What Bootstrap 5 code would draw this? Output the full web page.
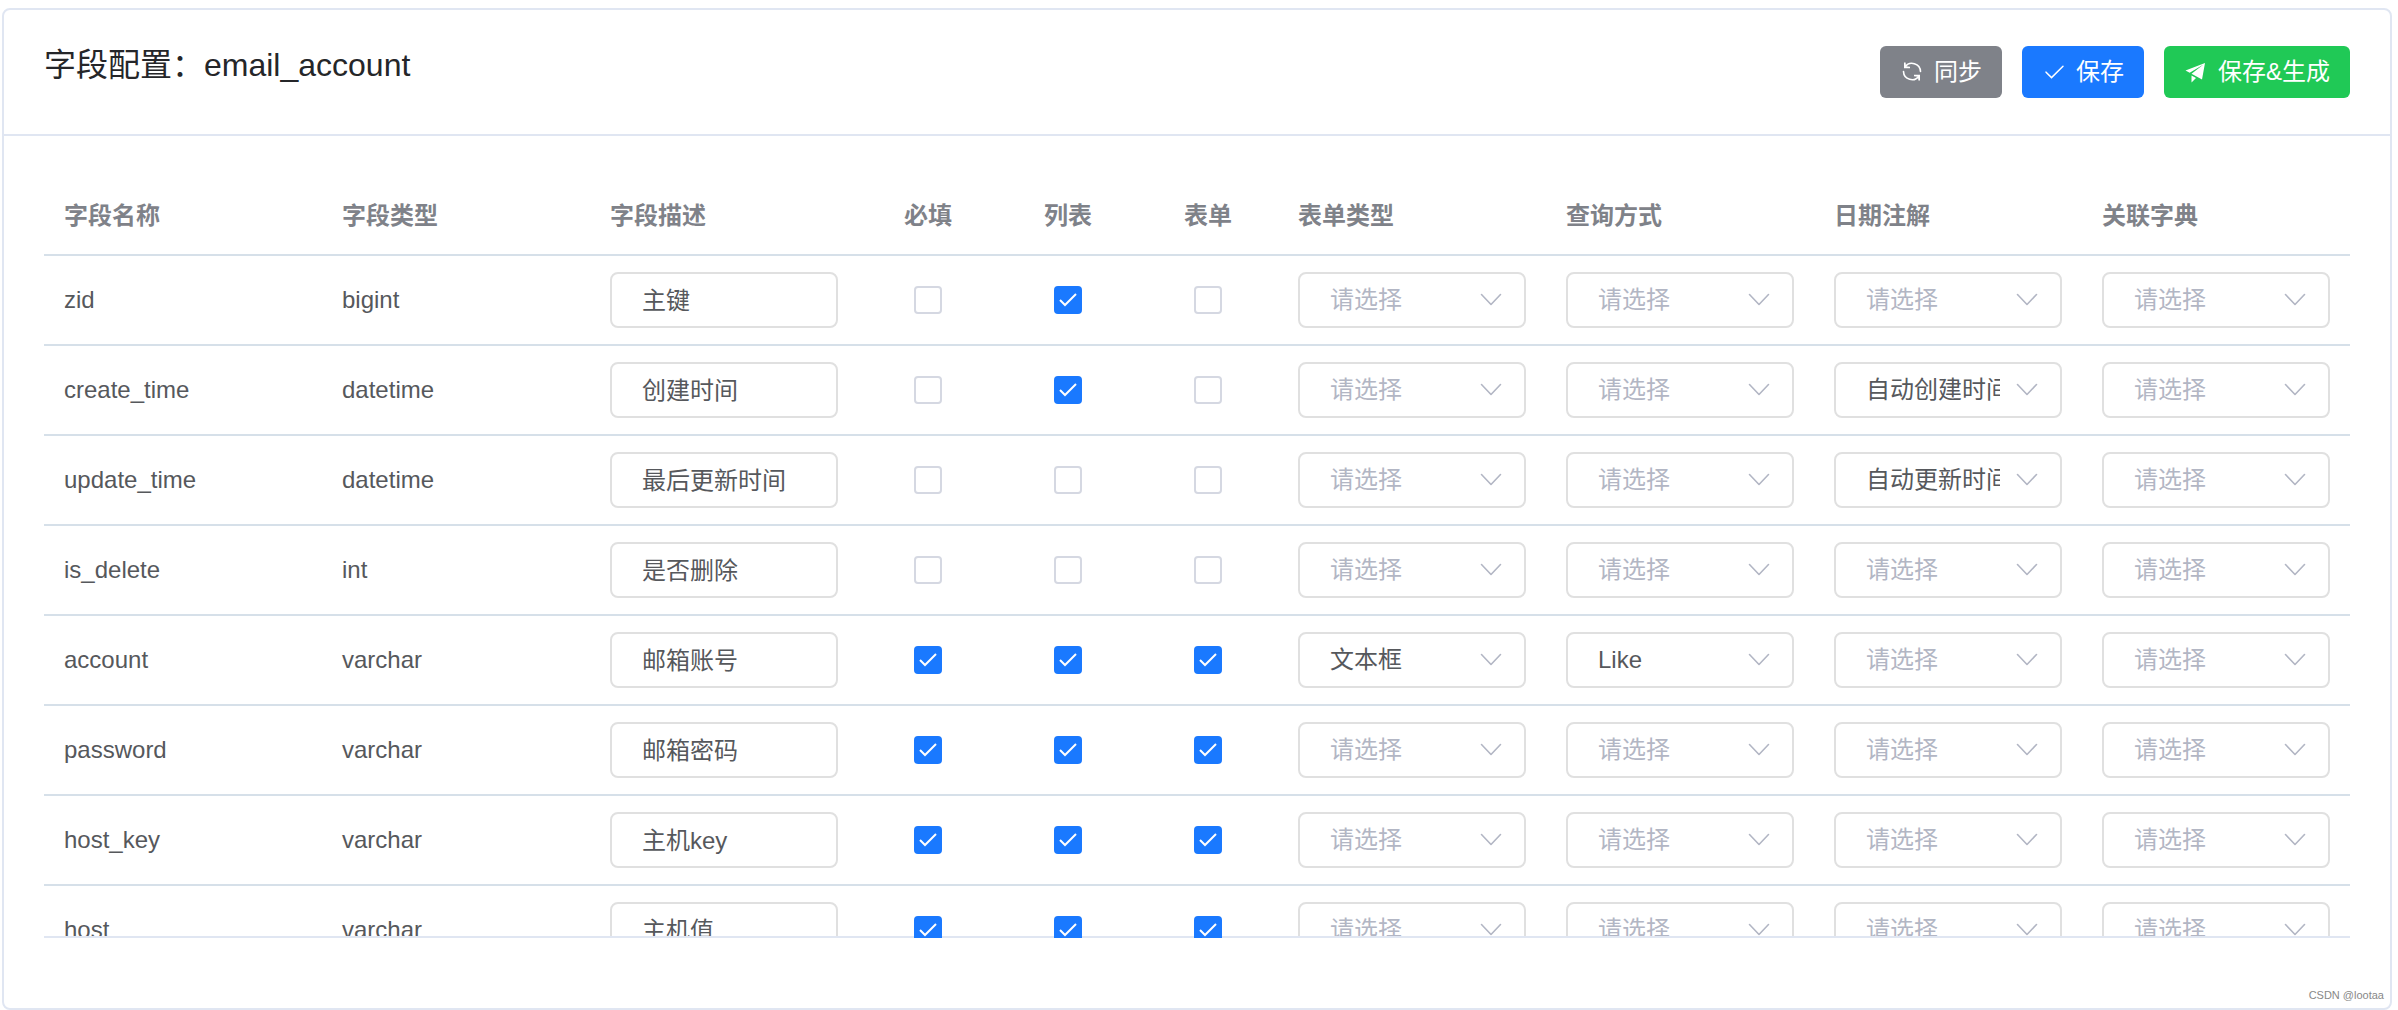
<!DOCTYPE html>
<html lang="zh-CN">
<head>
<meta charset="utf-8">
<meta name="viewport" content="width=device-width, initial-scale=1">
<title>字段配置：email_account</title>
<link href="https://cdn.jsdelivr.net/npm/bootstrap@5.3.0/dist/css/bootstrap.min.css" rel="stylesheet">
<style>
  body {
    font-family: "Liberation Sans", "Noto Sans CJK SC", sans-serif;
    font-size: 24px;
    line-height: 28px;
    color: #56585c;
    background: #fff;
  }
  .config-card {
    margin: 8px 6px 0 2px;
    border: 2px solid #e0e6f2;
    border-radius: 8px;
    background: #fff;
  }
  .config-card > .card-header {
    padding: 36px 40px;
    background: transparent;
    border-bottom: 2px solid #e0e6f2;
  }
  .config-card > .card-body { padding: 42px 40px 70px; }
  .config-title { font-size: 32px; line-height: 38px; color: #252629; }
  .tool-row { gap: 20px; }
  .tool-btn {
    display: inline-flex;
    align-items: center;
    gap: 10px;
    padding: 12px 20px;
    border: 0;
    border-radius: 6px;
    font-size: 24px;
    line-height: 28px;
    color: #fff;
  }
  .tool-btn svg { width: 24px; height: 24px; fill: currentColor; }
  .tool-sync, .tool-sync:hover { background: #7f8289; color: #fff; }
  .tool-save, .tool-save:hover { background: #1a79ff; color: #fff; }
  .tool-build, .tool-build:hover { background: #20c956; color: #fff; }

  .field-frame::after {
    content: "";
    position: absolute;
    inset: auto 0 0 0;
    height: 2px;
    background: #e0e6f2;
    z-index: 1;
  }
  .field-scroll {
    height: calc(100vh - 250px);
    min-height: 300px;
    overflow: auto;
    scrollbar-width: none;
  }
  .field-scroll::-webkit-scrollbar { display: none; }
  .field-table {
    table-layout: fixed;
    min-width: 2200px;
    border-collapse: separate;
    border-spacing: 0;
    color: inherit;
  }
  .field-table > thead th {
    position: sticky;
    top: 0;
    z-index: 3;
    padding: 24px 20px;
    background: #fff;
    color: #7f8289;
    font-weight: 700;
    border-bottom: 2px solid #d6e0e9;
  }
  .field-table > tbody td {
    padding: 16px 20px;
    background: #fff;
    color: inherit;
    border-bottom: 2px solid #d6e0e9;
  }
  .col-text { width: 268px; }
  .col-tick { width: 140px; }
  .field-table .form-control, .field-table .form-select {
    height: 56px;
    padding: 8px 30px;
    border: 2px solid #e0e0e0;
    border-radius: 8px;
    font-size: 24px;
    line-height: 36px;
    color: #56585c;
    background-color: #fff;
  }
  .field-table .form-control { padding: 6px 30px 10px; }
  .field-table .form-select {
    padding-right: 60px;
    text-overflow: clip;
    background-image: url("data:image/svg+xml,%3csvg xmlns='http://www.w3.org/2000/svg' viewBox='0 0 24 24'%3e%3cpath fill='none' stroke='%23b2b6c4' stroke-width='1.6' stroke-linecap='round' stroke-linejoin='round' d='m1.5 6.5 9.5 10 9.5-10'/%3e%3c/svg%3e");
    background-size: 24px 24px;
    background-position: right 20px center;
  }
  .field-table .form-select.is-blank { color: #b2b6c4; }
  .field-table .form-check-input {
    position: relative;
    z-index: 2;
    display: block;
    width: 28px;
    height: 28px;
    margin: 0 auto;
    border: 2px solid #d5d8e2;
    border-radius: 4px;
  }
  .field-table .form-check-input:checked {
    background-color: #1a79ff;
    border-color: #1a79ff;
    background-image: url("data:image/svg+xml,%3csvg xmlns='http://www.w3.org/2000/svg' viewBox='0 0 28 28'%3e%3cpath fill='none' stroke='%23fff' stroke-width='2' d='m6 14 5 5L22 8'/%3e%3c/svg%3e");
    background-size: 28px 28px;
  }
  .watermark {
    position: absolute;
    right: 6px;
    bottom: 6px;
    font-size: 11px;
    line-height: 14px;
    color: #888;
  }
</style>
</head>
<body>
<main class="card config-card">
  <div class="card-header d-flex justify-content-between align-items-start">
    <h1 class="config-title fw-normal mb-0">字段配置：email_account</h1>
    <div class="d-flex tool-row">
      <button type="button" class="btn tool-btn tool-sync"><svg viewBox="0 0 24 24" aria-hidden="true"><path d="M5 7A8.5 8.5 0 0 1 20.5 11.5M19 16A8.5 8.5 0 0 1 3.5 11.5" fill="none" stroke="currentColor" stroke-width="1.6" stroke-linecap="round"/><path d="M4 2.5H5.6L6 6.3 10 6.700V8.200H4zM20 20.500H18.400L18 16.700 14 16.300V14.800H20z"/></svg>同步</button>
      <button type="button" class="btn tool-btn tool-save"><svg viewBox="0 0 1024 1024" aria-hidden="true"><path d="M406.656 706.944 195.84 496.256a32 32 0 1 0-45.248 45.248l256 256 512-512a32 32 0 0 0-45.248-45.248L406.592 706.944z"/></svg>保存</button>
      <button type="button" class="btn tool-btn tool-build"><svg viewBox="0 0 1024 1024" aria-hidden="true"><path d="m64 448 832-320-128 704-446.08-243.328L832 192 242.816 545.472 64 448zm256 512V657.024L512 768 320 960z"/></svg>保存&amp;生成</button>
    </div>
  </div>
  <div class="card-body">
    <div class="field-frame position-relative">
      <div class="field-scroll">
        <table class="table field-table align-middle mb-0">
          <colgroup>
            <col><col class="col-text"><col class="col-text">
            <col class="col-tick"><col class="col-tick"><col class="col-tick">
            <col class="col-text"><col class="col-text"><col class="col-text"><col class="col-text">
          </colgroup>
          <thead>
            <tr>
              <th scope="col">字段名称</th>
              <th scope="col">字段类型</th>
              <th scope="col">字段描述</th>
              <th scope="col" class="text-center">必填</th>
              <th scope="col" class="text-center">列表</th>
              <th scope="col" class="text-center">表单</th>
              <th scope="col">表单类型</th>
              <th scope="col">查询方式</th>
              <th scope="col">日期注解</th>
              <th scope="col">关联字典</th>
            </tr>
          </thead>
          <tbody id="fieldRows"></tbody>
        </table>
      </div>
    </div>
  </div>
  <span class="watermark">CSDN @lootaa</span>
</main>
<script src="https://cdn.jsdelivr.net/npm/bootstrap@5.3.0/dist/js/bootstrap.bundle.min.js"></script>
<script>
  // name, type, description, [required, list, form], [form type, query, date, dictionary]
  const fields = [
    ['zid', 'bigint', '主键', [0, 1, 0], ['', '', '', '']],
    ['create_time', 'datetime', '创建时间', [0, 1, 0], ['', '', '自动创建时间', '']],
    ['update_time', 'datetime', '最后更新时间', [0, 0, 0], ['', '', '自动更新时间', '']],
    ['is_delete', 'int', '是否删除', [0, 0, 0], ['', '', '', '']],
    ['account', 'varchar', '邮箱账号', [1, 1, 1], ['文本框', 'Like', '', '']],
    ['password', 'varchar', '邮箱密码', [1, 1, 1], ['', '', '', '']],
    ['host_key', 'varchar', '主机key', [1, 1, 1], ['', '', '', '']],
    ['host', 'varchar', '主机值', [1, 1, 1], ['', '', '', '']]
  ];
  const ticks = ['必填', '列表', '表单'];
  const picks = ['表单类型', '查询方式', '日期注解', '关联字典'];

  document.getElementById('fieldRows').innerHTML = fields.map(([name, type, text, on, chosen]) => `
    <tr>
      <td>${name}</td>
      <td>${type}</td>
      <td><input type="text" class="form-control" value="${text}" aria-label="${name} 字段描述"></td>
      ${ticks.map((t, i) => `<td><input type="checkbox" class="form-check-input" aria-label="${name} ${t}"${on[i] ? ' checked' : ''}></td>`).join('')}
      ${picks.map((p, i) => `<td><select class="form-select${chosen[i] ? '' : ' is-blank'}" aria-label="${name} ${p}"><option>${chosen[i] || '请选择'}</option></select></td>`).join('')}
    </tr>`).join('');
</script>
</body>
</html>
